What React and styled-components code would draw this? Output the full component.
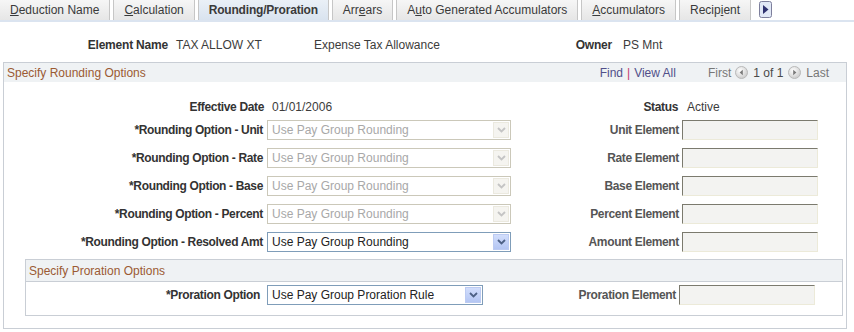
import React from "react";
import styled, { createGlobalStyle } from "styled-components";

const GlobalStyle = createGlobalStyle`
  html, body {
    margin: 0;
    padding: 0;
    background: #ffffff;
  }
  body {
    font-family: "Liberation Sans", Arial, sans-serif;
    font-size: 12px;
    color: #333333;
  }
`;

const Page = styled.div`
  width: 854px;
  height: 332px;
  overflow: hidden;
`;

const TabBar = styled.div`
  display: flex;
  align-items: flex-end;
  height: 20px;
  border-bottom: 2px solid #dbe4f0;
`;

const Tab = styled.div`
  height: 20px;
  box-sizing: border-box;
  display: flex;
  align-items: center;
  padding: 0 10px;
  margin-right: 3px;
  border-left: 1px solid #c6c6c6;
  border-right: 1px solid #c6c6c6;
  background: ${(p) =>
    p.$active
      ? "linear-gradient(#eaf0f7, #d9e3ef)"
      : "linear-gradient(#f6f6f6, #e6e6e6)"};
  font-weight: ${(p) => (p.$active ? "bold" : "normal")};
  letter-spacing: ${(p) => (p.$active ? "-0.2px" : "0")};
  color: #3a3a3a;
  white-space: nowrap;

  &:first-child {
    border-left: none;
    padding-left: 10px;
  }
`;

const TabArrow = styled.div`
  margin-left: 5px;
  margin-bottom: 2px;
  display: flex;
`;

const Summary = styled.div`
  display: flex;
  align-items: center;
  height: 20px;
  margin-top: 13px;
`;

const SummaryLabel = styled.div`
  width: ${(p) => p.$width}px;
  text-align: right;
  font-weight: bold;
  letter-spacing: -0.2px;
  flex-shrink: 0;
`;

const SummaryValue = styled.div`
  width: ${(p) => p.$width}px;
  margin-left: ${(p) => p.$gap ?? 8}px;
  flex-shrink: 0;
  color: #3c3c3c;
`;

const Section = styled.div`
  margin: 7px 0 0 3px;
  width: 844px;
  box-sizing: border-box;
  border: 1px solid #c9ced5;
  padding-bottom: 12px;
`;

const SectionHeader = styled.div`
  display: flex;
  align-items: center;
  justify-content: space-between;
  height: ${(p) => p.$height || 19}px;
  background: #eff2f4;
  padding: 0 17px 0 3px;
  border-bottom: ${(p) => (p.$divider ? "1px solid #c9ced5" : "none")};
`;

const SectionTitle = styled.div`
  color: #9b5a33;
  font-size: 12px;
`;

const Nav = styled.div`
  display: flex;
  align-items: center;
  color: #777777;
`;

const NavLink = styled.span`
  color: #514f8a;
`;

const Pipe = styled.span`
  color: #c2386c;
  margin: 0 4px;
`;

const NavText = styled.span`
  margin: 0 ${(p) => p.$right ?? 0}px 0 ${(p) => p.$left ?? 0}px;
`;

const NavCount = styled.span`
  color: #4a4a4a;
  margin: 0 5px 0 5px;
`;

const SectionBody = styled.div`
  padding-top: 15px;
`;

const FormRow = styled.div`
  display: flex;
  align-items: center;
  height: 20px;
  margin-top: ${(p) => p.$gap || 0}px;
`;

const FieldLabel = styled.div`
  width: ${(p) => p.$width}px;
  flex-shrink: 0;
  text-align: right;
  font-weight: bold;
  letter-spacing: -0.35px;
  color: ${(p) => (p.$muted ? "#555555" : "#333333")};
  white-space: nowrap;
`;

const FieldValue = styled.div`
  margin-left: ${(p) => p.$gap}px;
  width: ${(p) => p.$width}px;
  flex-shrink: 0;
  color: #3c3c3c;
`;

const Select = styled.div`
  margin-left: ${(p) => p.$gap}px;
  width: ${(p) => p.$width}px;
  height: 20px;
  box-sizing: border-box;
  flex-shrink: 0;
  display: flex;
  align-items: center;
  justify-content: space-between;
  border: 1px solid ${(p) => (p.$disabled ? "#cbc8b9" : "#7f9db9")};
  background: #ffffff;
  color: ${(p) => (p.$disabled ? "#a8a8a8" : "#222222")};
  padding-left: 4px;
`;

const SelectButton = styled.div`
  width: 16px;
  height: 16px;
  margin-right: 1px;
  box-sizing: border-box;
  display: flex;
  align-items: center;
  justify-content: center;
  border: 1px solid ${(p) => (p.$disabled ? "#ebe9df" : "#bccbf2")};
  background: ${(p) =>
    p.$disabled
      ? "#f5f4f0"
      : "linear-gradient(#d2defc, #b4c6f3)"};
`;

const TextBox = styled.div`
  margin-left: 3px;
  width: 136px;
  height: 20px;
  box-sizing: border-box;
  flex-shrink: 0;
  border-top: 1px solid #7b7a6e;
  border-left: 1px solid #7b7a6e;
  border-right: 1px solid #ecead9;
  border-bottom: 1px solid #ecead9;
  background: #f3f3f1;
`;

const SubSection = styled.div`
  margin: 7px 0 0 21px;
  width: 818px;
  box-sizing: border-box;
  border: 1px solid #c9ced5;
  padding: 3px 0 10px;
  & > ${SectionHeader} {
    margin-top: -3px;
    margin-bottom: 3px;
  }
`;

const Chevron = ({ disabled }) => (
  <svg width="9" height="6" viewBox="0 0 9 6">
    <path
      d="M1 1 L4.5 4.5 L8 1"
      fill="none"
      stroke={disabled ? "#c4c4c4" : "#4d6185"}
      strokeWidth="1.8"
    />
  </svg>
);

const Dropdown = ({ value, width, gap, disabled }) => (
  <Select $width={width} $gap={gap} $disabled={disabled}>
    <span>{value}</span>
    <SelectButton $disabled={disabled}>
      <Chevron disabled={disabled} />
    </SelectButton>
  </Select>
);

const NavButton = ({ dir }) => (
  <svg width="13" height="13" viewBox="0 0 13 13">
    <defs>
      <radialGradient id={`g${dir}`} cx="0.4" cy="0.35" r="0.7">
        <stop offset="0" stopColor="#ffffff" />
        <stop offset="1" stopColor="#c9c9c9" />
      </radialGradient>
    </defs>
    <circle cx="6.5" cy="6.5" r="6" fill={`url(#g${dir})`} stroke="#b9b9b9" />
    {dir === "left" ? (
      <path d="M7.8 3.8 L4.6 6.5 L7.8 9.2 Z" fill="#7a7a7a" />
    ) : (
      <path d="M5.2 3.8 L8.4 6.5 L5.2 9.2 Z" fill="#7a7a7a" />
    )}
  </svg>
);

const ScrollTabs = () => (
  <svg width="14" height="17" viewBox="0 0 14 17">
    <rect x="0.5" y="0.5" width="12" height="16" rx="2" fill="#e1e8f6" stroke="#7d7f9c" />
    <path d="M4 4 L9.5 8.5 L4 13 Z" fill="#2f3270" />
  </svg>
);

const roundingRows = [
  { label: "*Rounding Option - Unit", right: "Unit Element", disabled: true },
  { label: "*Rounding Option - Rate", right: "Rate Element", disabled: true },
  { label: "*Rounding Option - Base", right: "Base Element", disabled: true },
  { label: "*Rounding Option - Percent", right: "Percent Element", disabled: true },
  { label: "*Rounding Option - Resolved Amt", right: "Amount Element", disabled: false },
];

export default function App() {
  return (
    <Page>
      <GlobalStyle />
      <TabBar>
        <Tab><span><u>D</u>eduction Name</span></Tab>
        <Tab><span><u>C</u>alculation</span></Tab>
        <Tab $active>Rounding/Proration</Tab>
        <Tab><span>Arr<u>e</u>ars</span></Tab>
        <Tab><span>A<u>u</u>to Generated Accumulators</span></Tab>
        <Tab><span><u>A</u>ccumulators</span></Tab>
        <Tab><span>Recip<u>i</u>ent</span></Tab>
        <TabArrow><ScrollTabs /></TabArrow>
      </TabBar>

      <Summary>
        <SummaryLabel $width={168}>Element Name</SummaryLabel>
        <SummaryValue $width={138}>TAX ALLOW XT</SummaryValue>
        <SummaryValue $width={260} $gap={0}>Expense Tax Allowance</SummaryValue>
        <SummaryLabel $width={38}>Owner</SummaryLabel>
        <SummaryValue $width={80} $gap={11}>PS Mnt</SummaryValue>
      </Summary>

      <Section>
        <SectionHeader>
          <SectionTitle>Specify Rounding Options</SectionTitle>
          <Nav>
            <NavLink>Find</NavLink>
            <Pipe>|</Pipe>
            <NavLink>View All</NavLink>
            <NavText $left={32} $right={4}>First</NavText>
            <NavButton dir="left" />
            <NavCount>1 of 1</NavCount>
            <NavButton dir="right" />
            <NavText $left={5}>Last</NavText>
          </Nav>
        </SectionHeader>
        <SectionBody>
          <FormRow>
            <FieldLabel $width={260}>Effective Date</FieldLabel>
            <FieldValue $gap={8} $width={240}>01/01/2006</FieldValue>
            <FieldLabel $width={166}>Status</FieldLabel>
            <FieldValue $gap={9} $width={80}>Active</FieldValue>
          </FormRow>
          {roundingRows.map((row, i) => (
            <FormRow key={row.label} $gap={i === 0 ? 3 : 8}>
              <FieldLabel $width={259}>{row.label}</FieldLabel>
              <Dropdown
                value="Use Pay Group Rounding"
                width={244}
                gap={4}
                disabled={row.disabled}
              />
              <FieldLabel $width={168} $muted>{row.right}</FieldLabel>
              <TextBox />
            </FormRow>
          ))}
        </SectionBody>

        <SubSection>
          <SectionHeader $height={21} $divider>
            <SectionTitle>Specify Proration Options</SectionTitle>
          </SectionHeader>
          <FormRow>
            <FieldLabel $width={234}>*Proration Option</FieldLabel>
            <Dropdown
              value="Use Pay Group Proration Rule"
              width={216}
              gap={7}
              disabled={false}
            />
            <FieldLabel $width={193} $muted>Proration Element</FieldLabel>
            <TextBox />
          </FormRow>
        </SubSection>
      </Section>
    </Page>
  );
}
